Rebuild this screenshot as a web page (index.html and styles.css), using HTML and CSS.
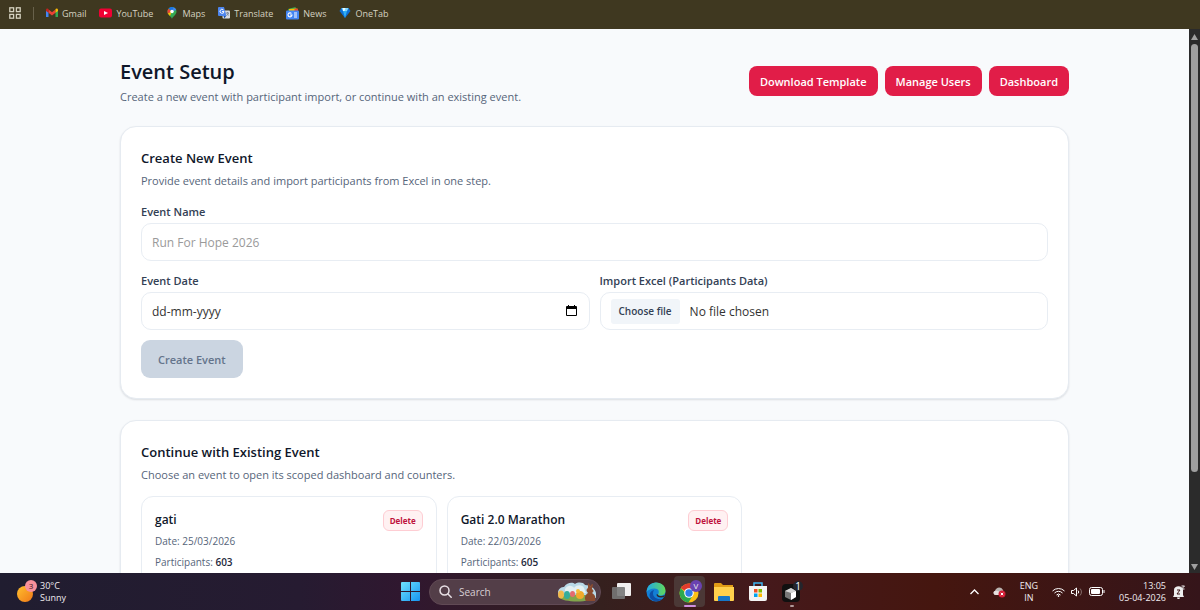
FILE: index.html
```html
<!DOCTYPE html>
<html lang="en">
<head>
    <meta charset="UTF-8">
    <meta name="viewport" content="width=device-width, initial-scale=1.0">
    <title>Event Setup</title>
    <link rel="stylesheet" href="styles.css">
</head>
<body>
    <nav class="bookmarks">
        <button class="apps" aria-label="Apps">
            <svg width="12" height="12" viewBox="0 0 12 12" fill="none" stroke="#d5d2c0" stroke-width="1.3">
                <rect x="0.8" y="0.8" width="3.8" height="3.8"/><rect x="7.4" y="0.8" width="3.8" height="3.8"/>
                <rect x="0.8" y="7.4" width="3.8" height="3.8"/><rect x="7.4" y="7.4" width="3.8" height="3.8"/>
            </svg>
        </button>
        <span class="divider"></span>
        <a href="#">
            <svg width="12" height="12" viewBox="0 0 24 24">
                <path fill="#4285f4" d="M0 6v14h5V9z"/><path fill="#34a853" d="M24 6v14h-5V9z"/>
                <path fill="#ea4335" d="M5 5l7 5.500 7-5.500v6.500l-7 5.500-7-5.500z"/>
                <path fill="#c5221f" d="M0 6c0-3 3-4 5-2v7.500L0 8z"/><path fill="#fbbc04" d="M24 6c0-3-3-4-5-2v7.500L24 8z"/>
            </svg>
            Gmail
        </a>
        <a href="#">
            <svg width="13" height="12" viewBox="0 0 26 24">
                <rect y="3" width="26" height="18" rx="4" fill="#f00033"/><path fill="#fff" d="M10 8l8 4-8 4z"/>
            </svg>
            YouTube
        </a>
        <a href="#">
            <svg width="12" height="12" viewBox="0 0 24 24">
                <path fill="#34a853" d="M12 24c-1-5-9-8-9-15a9 9 0 0 1 18 0c0 7-8 10-9 15z"/>
                <path fill="#4285f4" d="M12 9l3-8.500A9 9 0 0 1 20.500 6z"/><path fill="#1a73e8" d="M12 9L5 3.500A9 9 0 0 1 15 .5z"/>
                <path fill="#ea4335" d="M12 9l-8.500 4C2 9 3 6 5 3.500z"/><path fill="#fbbc04" d="M12 9l-4 9L3.500 13z"/>
                <circle cx="12" cy="9" r="3.500" fill="#fff"/>
            </svg>
            Maps
        </a>
        <a href="#">
            <svg width="12" height="12" viewBox="0 0 24 24">
                <rect x="9" y="7" width="15" height="16" rx="2" fill="#d6dbe3"/><path fill="#174ea6" d="M11 18h5l-3 5z"/>
                <path fill="#4c85ee" d="M2 0h10l5 18H2a2 2 0 0 1-2-2V2a2 2 0 0 1 2-2z"/>
                <path fill="none" stroke="#fff" stroke-width="1.800" d="M11 6a4 4 0 1 0 1 3H8"/>
                <path fill="none" stroke="#6b7a90" stroke-width="1.500" d="M16 12h6M19 10v2M21 12c-1 3-2 4-4 5M18 13l3 4"/>
            </svg>
            Translate
        </a>
        <a href="#">
            <svg width="13" height="13" viewBox="0 0 26 26">
                <path fill="#34a853" d="M4 4l15-4 2 8H5z"/><path fill="#fbbc04" d="M6 4l17-1v6H6z"/><path fill="#ea4335" d="M17 3l7 1-1 6h-6z"/>
                <rect y="7" width="26" height="18" rx="2" fill="#4285f4"/>
                <path fill="none" stroke="#fff" stroke-width="2.200" d="M11 13a4 4 0 1 0 1 3H8M16 16h6M16 12h6M16 20h6"/>
            </svg>
            News
        </a>
        <a href="#">
            <svg width="12" height="12" viewBox="0 0 24 24">
                <path fill="#0d6fd8" d="M5 2h14l4 6-11 14L1 8z"/><path fill="#7fd8ff" d="M5 2h14l-3 6H8z"/><path fill="#e8faff" d="M8 2h5l-2 6H8z"/><path fill="#31aef5" d="M8 8h8l-4 14z"/>
            </svg>
            OneTab
        </a>
    </nav>

    <div class="browser">
        <div class="page">
            <main class="container">
                <header class="page-header">
                    <div>
                        <h1>Event Setup</h1>
                        <p>Create a new event with participant import, or continue with an existing event.</p>
                    </div>
                    <div class="actions">
                        <button>Download Template</button>
                        <button>Manage Users</button>
                        <button>Dashboard</button>
                    </div>
                </header>

                <section class="card">
                    <h2>Create New Event</h2>
                    <p>Provide event details and import participants from Excel in one step.</p>
                    <form class="event-form">
                        <div class="field wide">
                            <label for="name">Event Name</label>
                            <input class="box" type="text" id="name" placeholder="Run For Hope 2026">
                        </div>
                        <div class="field">
                            <label for="date">Event Date</label>
                            <div class="box date-box">
                                <input type="text" id="date" placeholder="dd-mm-yyyy">
                                <button type="button" aria-label="Open calendar">
                                    <svg width="11" height="12" viewBox="0 0 11 12">
                                        <path fill="#000" fill-rule="evenodd" d="M2 0h1v1h5V0h1v1h1a1 1 0 0 1 1 1v8a1 1 0 0 1-1 1H1a1 1 0 0 1-1-1V2a1 1 0 0 1 1-1h1zM1 4v6h9V4z"/>
                                    </svg>
                                </button>
                            </div>
                        </div>
                        <div class="field">
                            <label for="file">Import Excel (Participants Data)</label>
                            <label class="box file-box">
                                <input type="file" id="file" accept=".xlsx,.xls">
                                <span class="choose">Choose file</span>
                                <span>No file chosen</span>
                            </label>
                        </div>
                        <button class="create" type="submit" disabled>Create Event</button>
                    </form>
                </section>

                <section class="card">
                    <h2>Continue with Existing Event</h2>
                    <p>Choose an event to open its scoped dashboard and counters.</p>
                    <div class="events">
                        <article class="event">
                            <div class="event-top">
                                <h3>gati</h3>
                                <button class="delete">Delete</button>
                            </div>
                            <p>Date: 25/03/2026</p>
                            <p>Participants: <b>603</b></p>
                        </article>
                        <article class="event">
                            <div class="event-top">
                                <h3>Gati 2.0 Marathon</h3>
                                <button class="delete">Delete</button>
                            </div>
                            <p>Date: 22/03/2026</p>
                            <p>Participants: <b>605</b></p>
                        </article>
                    </div>
                </section>
            </main>
        </div>
        <div class="scrollbar">
            <svg width="7" height="6" viewBox="0 0 7 6"><path fill="#a0a0a0" d="M3.500 0L7 6H0z"/></svg>
            <div class="track"><div class="thumb"></div></div>
            <svg width="7" height="6" viewBox="0 0 7 6"><path fill="#a0a0a0" d="M3.500 6L7 0H0z"/></svg>
        </div>
    </div>

    <footer class="taskbar">
        <button class="weather">
            <svg width="20" height="24" viewBox="0 0 20 24">
                <defs><linearGradient id="sun" x1="0" y1="0" x2="1" y2="1"><stop offset="0" stop-color="#ffc02e"/><stop offset="1" stop-color="#f07818"/></linearGradient></defs>
                <circle cx="8" cy="14" r="8" fill="url(#sun)"/><circle cx="14" cy="6" r="6" fill="#f8909b"/>
                <text x="14" y="9" text-anchor="middle" font-size="8" fill="#3a1520">3</text>
            </svg>
            <span>30°C<br>Sunny</span>
        </button>

        <div class="dock">
            <button aria-label="Start">
                <svg width="19" height="19" viewBox="0 0 19 19">
                    <defs><linearGradient id="win" x1="0" y1="0" x2="1" y2="1"><stop offset="0" stop-color="#6fe3ff"/><stop offset="1" stop-color="#1593f0"/></linearGradient></defs>
                    <path fill="url(#win)" d="M0 1a1 1 0 0 1 1-1h8v9H0zM10 0h8a1 1 0 0 1 1 1v8h-9zM0 10h9v9H1a1 1 0 0 1-1-1zM10 10h9v8a1 1 0 0 1-1 1h-8z"/>
                </svg>
            </button>
            <label class="search">
                <svg width="13" height="13" viewBox="0 0 13 13" fill="none" stroke="#e8e0e5" stroke-width="1.500" stroke-linecap="round"><circle cx="5.500" cy="5.500" r="4.500"/><path d="M9 9l3.200 3.200"/></svg>
                <input type="text" placeholder="Search" aria-label="Search">
                <svg width="40" height="20" viewBox="0 0 40 20">
                    <path fill="#b8d9e8" d="M1 11c0-5 4-6 6-6 3-5 9-5 11-3 3-2 8-2 10 1 5 0 10 3 11 8v5H2z"/>
                    <path fill="#e4f0f3" d="M8 7c3-5 8-3 9-1 3-4 9-3 10 0l2 5H8z"/>
                    <path fill="#82a64b" d="M2 15c8-3 28-3 36 0-3 6-33 6-36 0z"/>
                    <ellipse cx="4" cy="12.500" rx="3" ry="4" fill="#f0b84a"/><ellipse cx="10" cy="13" rx="3" ry="4" fill="#35ad9b"/>
                    <ellipse cx="15.500" cy="12" rx="2.500" ry="3" fill="#e46b70"/><ellipse cx="23" cy="13" rx="4" ry="4" fill="#f1a92c"/><circle cx="21" cy="9" r="2" fill="#f7be39"/>
                    <path fill="#8b4b2e" d="M31 1c2 1 2 3 2 4 0-2 2-3 3-3 0 2-1 3-1 5 2 1 2 3 0 4 3 2 4 4 3 8h-9c-2-3-1-6 2-8-2-2-2-4 0-5z"/>
                </svg>
            </label>
            <button aria-label="Task view">
                <svg width="19" height="19" viewBox="0 0 19 19"><rect x="5" y="1" width="14" height="13" rx="1" fill="#f1efef"/><rect x="0" y="5" width="13" height="12" rx="1" fill="#777" fill-opacity="0.900"/></svg>
            </button>
            <button aria-label="Edge">
                <svg width="20" height="20" viewBox="0 0 20 20">
                    <defs>
                        <linearGradient id="edge" x1="0" y1="0" x2="1" y2="0"><stop offset="0" stop-color="#20a9e8"/><stop offset="1" stop-color="#61d75b"/></linearGradient>
                    </defs>
                    <circle cx="10" cy="10" r="9.500" fill="#137fd6"/>
                    <path fill="url(#edge)" d="M.5 10C1 4 5 .5 10 .5c6 0 9.500 4 9.500 8 0 3-2 5-5 5-2 0-3-1-2-2 1-2 0-5-4-5-4 0-7 2-8 3.500z"/>
                    <path fill="#0d4fa6" d="M8 8c-3 5 1 10 8 9-3 3-8 3-11 0-3-4-1-8 3-9z"/>
                    <path fill="#30272b" d="M11.500 12c0 2 4 3 7.500 1l-1 2c-4 1-7.500 0-7.500-2.500z"/>
                </svg>
            </button>
            <button class="active" aria-label="Chrome">
                <svg width="24" height="24" viewBox="0 0 24 24">
                    <circle cx="11" cy="13" r="9.500" fill="#fbc116"/>
                    <path fill="#e33b2e" d="M2.800 8.200a9.500 9.500 0 0 1 16.400 0L11 13z"/><path fill="#e33b2e" d="M11 8.500h9l-2-4-7-1z"/>
                    <path fill="#2da94f" d="M2.800 8.200A9.500 9.500 0 0 0 10.500 22.500l4.500-7.500-4 1z"/>
                    <circle cx="11" cy="13" r="4.800" fill="#fff"/><circle cx="11" cy="13" r="3.700" fill="#2f7de8"/>
                    <circle cx="18" cy="6" r="6" fill="#6a42b0"/>
                    <text x="18" y="9" text-anchor="middle" font-size="8" fill="#eee">V</text>
                </svg>
            </button>
            <button aria-label="File Explorer">
                <svg width="20" height="18" viewBox="0 0 20 18"><path fill="#e19c16" d="M0 1a1 1 0 0 1 1-1h6l2 2h10v6H0z"/><path fill="#ffd04c" d="M0 4h20v13a1 1 0 0 1-1 1H1a1 1 0 0 1-1-1z"/><path fill="#1676c6" d="M4 18v-4a1 1 0 0 1 1-1h10a1 1 0 0 1 1 1v4z"/></svg>
            </button>
            <button aria-label="Microsoft Store">
                <svg width="18" height="20" viewBox="0 0 18 20"><path fill="none" stroke="#3bb4ef" stroke-width="1.500" d="M5 5V1h8v4"/><path fill="#f4f4f4" d="M0 4h18v13a2 2 0 0 1-2 2H2a2 2 0 0 1-2-2z"/><path fill="#f25022" d="M5 7h3.500v3.500H5z"/><path fill="#7fba00" d="M9.500 7H13v3.500H9.500z"/><path fill="#00a4ef" d="M5 11.500h3.500V15H5z"/><path fill="#ffb900" d="M9.500 11.500H13V15H9.500z"/></svg>
            </button>
            <button class="running" aria-label="Cursor">
                <svg width="22" height="22" viewBox="0 0 22 22"><rect x="1" y="3" width="18" height="18" rx="4" fill="#101010"/><path fill="#777" d="M4 10l6-3 5 3v6l-5 3-6-3z"/><path fill="#d5d5d5" d="M4 10l6-3 5 3-5 2z"/><path fill="#fff" d="M15 10v6l-5 3v-7z"/><circle cx="17" cy="5" r="5" fill="#24252c"/><text x="17" y="9" text-anchor="middle" font-size="10" fill="#fff">1</text></svg>
            </button>
        </div>

        <div class="tray">
            <button aria-label="Show hidden icons"><svg width="9" height="6" viewBox="0 0 9 6" fill="none" stroke="#fff" stroke-width="1.300"><path d="M.5 5l4-4 4 4"/></svg></button>
            <button class="cloud" aria-label="OneDrive"><svg width="13" height="12" viewBox="0 0 13 12"><path fill="#b9b3b0" d="M3 9C0 9 0 5 2 5c1-4 6-5 8-1l1 5z"/><path fill="#e5e0de" d="M3 9C0 9 0 5 2 5c3-1 5 1 7 4z"/><circle cx="9" cy="8" r="3.500" fill="#d51e36"/><path stroke="#fff" d="M7.800 6.800l2.400 2.400M10.200 6.800L7.800 9.200"/></svg></button>
            <span class="lang">ENG<br>IN</span>
            <button class="status" aria-label="Network, sound and battery">
                <svg width="13" height="10" viewBox="0 0 13 10" fill="none" stroke="#fff"><path d="M.5 4a8.500 8.500 0 0 1 12 0M2.500 6a5.600 5.600 0 0 1 8 0M4.500 8a2.800 2.800 0 0 1 4 0"/><circle cx="6.500" cy="9" r=".5" fill="#fff"/></svg>
                <svg width="12" height="10" viewBox="0 0 12 10" fill="none" stroke="#fff"><path d="M.5 3.500h2L5.500 1v8l-3-2.500h-2zM7 3.500a2 2 0 0 1 0 3"/><path stroke="#87706d" d="M9 1.500a5 5 0 0 1 0 7"/></svg>
                <svg width="16" height="9" viewBox="0 0 16 9"><rect x=".5" y=".5" width="13" height="8" rx="2" fill="none" stroke="#fff"/><rect x="2" y="2" width="9" height="5" rx="1" fill="#fff"/><path fill="#fff" d="M14.500 3h1v3h-1z"/></svg>
            </button>
            <div class="clock-area">
                <span class="clock">13:05<br>05-04-2026</span>
                <button aria-label="Notifications"><svg width="12" height="14" viewBox="0 0 12 14"><path fill="#eee" d="M1 10V5c0-5 9-5 9 0v5l1 2H0zM4 12.500h3c0 2-3 2-3 0z"/><path fill="none" stroke="#3b1517" d="M4 5h3L4 9h3"/><path fill="none" stroke="#eee" d="M8.500 1h3l-3 3h3"/></svg></button>
            </div>
        </div>
    </footer>
</body>
</html>
```
FILE: styles.css
```css
* {
    box-sizing: border-box;
}

body {
    margin: 0;
    height: 100vh;
    display: flex;
    flex-direction: column;
    overflow: hidden;
    font-family: "Open Sans", "Noto Sans", sans-serif;
    font-size: 11px;
    color: #0f172a;
    background: #f8fafc;
}

h1, h2, h3, p {
    margin: 0;
}

h1, h2, h3, b {
    font-weight: 600;
}

button, input {
    font: inherit;
    padding: 0;
    border: none;
    background: none;
}

button {
    cursor: pointer;
}

svg {
    display: block;
    flex-shrink: 0;
}

/* bookmarks bar */
.bookmarks {
    height: 29px;
    flex-shrink: 0;
    display: flex;
    align-items: center;
    gap: 13px;
    padding: 0 9px 3px;
    background: #3f3820;
    font-size: 9px;
}

.bookmarks a {
    display: flex;
    align-items: center;
    gap: 4px;
    color: #d5d2c0;
    text-decoration: none;
}

.divider {
    width: 1px;
    height: 13px;
    margin: 0 -1px;
    background: #68614b;
}

/* browser viewport */
.browser {
    flex: 1;
    min-height: 0;
    display: flex;
}

.page {
    flex: 1;
    overflow: hidden;
    padding: 28px 20px 0;
}

.scrollbar {
    width: 11px;
    display: flex;
    flex-direction: column;
    align-items: center;
    gap: 4px;
    padding: 5px 0 3px;
    background: #2b2b2b;
}

.track {
    flex: 1;
}

.thumb {
    width: 7px;
    height: 83%;
    border-radius: 4px;
    background: #9f9f9f;
}

.container {
    max-width: 949px;
    margin: 0 auto;
}

.page-header {
    display: flex;
    justify-content: space-between;
    align-items: center;
    margin-bottom: 19px;
}

h1 {
    font-size: 20px;
    line-height: 30px;
}

.page-header p, .card > p {
    line-height: 20px;
    color: #56657a;
}

.actions {
    display: flex;
    gap: 7px;
    padding-bottom: 2px;
}

.actions button {
    height: 30px;
    padding: 0 11px;
    border-radius: 8px;
    background: #e11d48;
    color: #fff;
    font-weight: 600;
}

.card {
    padding: 20px;
    margin-bottom: 21px;
    border: 1px solid #e6ebf1;
    border-radius: 16px;
    background: #fff;
    box-shadow: 0 1px 2px rgba(15, 23, 42, 0.12);
}

h2 {
    font-size: 13px;
    line-height: 22px;
    margin-bottom: 2px;
}

/* form */
.event-form {
    display: grid;
    grid-template-columns: 1fr 1fr;
    gap: 10px;
    margin-top: 11px;
}

.wide {
    grid-column: span 2;
}

.field {
    display: flex;
    flex-direction: column;
    gap: 2px;
    line-height: 19px;
}

.field label {
    color: #334155;
    font-weight: 600;
}

.field .box {
    display: flex;
    align-items: center;
    width: 100%;
    height: 38px;
    padding: 0 10px;
    border: 1px solid #e8edf3;
    border-radius: 10px;
    color: #333;
    font-size: 12px;
    font-weight: 400;
}

.box::placeholder {
    color: #9a9a9a;
}

.date-box input {
    flex: 1;
    min-width: 0;
}

.date-box input::placeholder {
    color: #333;
}

.date-box button {
    padding: 2px;
}

.file-box {
    gap: 10px;
}

.file-box input {
    position: absolute;
    width: 1px;
    height: 1px;
    opacity: 0;
}

.field .choose {
    padding: 3px 8px;
    border-radius: 3px;
    background: #f1f5f9;
    color: #334155;
    font-size: 10px;
    font-weight: 600;
}

.create {
    justify-self: start;
    height: 38px;
    padding: 0 17px;
    border-radius: 9px;
    background: #cbd5e1;
    color: #64748b;
    font-weight: 600;
}

/* event list */
.events {
    display: grid;
    grid-template-columns: repeat(3, 1fr);
    gap: 10px;
    margin-top: 11px;
}

.event {
    height: 120px;
    padding: 13px;
    border: 1px solid #e8edf3;
    border-radius: 12px;
}

.event-top {
    display: flex;
    justify-content: space-between;
}

.event h3 {
    font-size: 12px;
    line-height: 20px;
}

.event p {
    font-size: 10px;
    line-height: 21px;
    color: #56657a;
}

.event b {
    color: #1e293b;
}

.delete {
    height: 21px;
    padding: 0 6px;
    border: 1px solid #fecdd3;
    border-radius: 6px;
    background: #fff1f2;
    color: #be123c;
    font-size: 8px;
    font-weight: 700;
}

/* taskbar */
.taskbar {
    height: 37px;
    flex-shrink: 0;
    display: grid;
    grid-template-columns: 1fr auto 1fr;
    align-items: center;
    padding: 0 15px 0 17px;
    background: linear-gradient(90deg, #201d30 0%, #261b31 25%, #30172f 34%, #35201e 50%, #45191b 64%, #45160f 78%, #35151a 100%);
    color: #f1edf0;
    font-size: 9px;
    line-height: 12px;
}

.taskbar button {
    color: inherit;
}

.weather {
    display: flex;
    align-items: center;
    gap: 3px;
    text-align: left;
}

.dock {
    display: flex;
    align-items: center;
    gap: 3px;
}

.dock button {
    position: relative;
    display: flex;
    align-items: center;
    justify-content: center;
    width: 31px;
    height: 31px;
    border-radius: 4px;
}

.dock .active {
    background: #4b3836;
}

.dock .active::after, .dock .running::after {
    content: "";
    position: absolute;
    bottom: 0;
    width: 12px;
    height: 2px;
    border-radius: 1px;
    background: #cf8fe0;
}

.dock .running::after {
    width: 4px;
    background: #b09a9a;
}

.search {
    display: flex;
    align-items: center;
    gap: 7px;
    width: 172px;
    height: 26px;
    margin-right: 2px;
    padding: 0 3px 0 9px;
    border: 1px solid #614a55;
    border-radius: 13px;
    background: #533e48;
}

.search input {
    flex: 1;
    min-width: 0;
    font-size: 10px;
}

.search input::placeholder {
    color: #d8cfd4;
}

.tray {
    display: flex;
    align-items: center;
    justify-content: flex-end;
    gap: 14px;
}

.lang {
    text-align: center;
}

.status {
    display: flex;
    align-items: center;
    gap: 6px;
}

.clock-area {
    display: flex;
    align-items: center;
    gap: 7px;
}

.clock {
    text-align: right;
}
```
